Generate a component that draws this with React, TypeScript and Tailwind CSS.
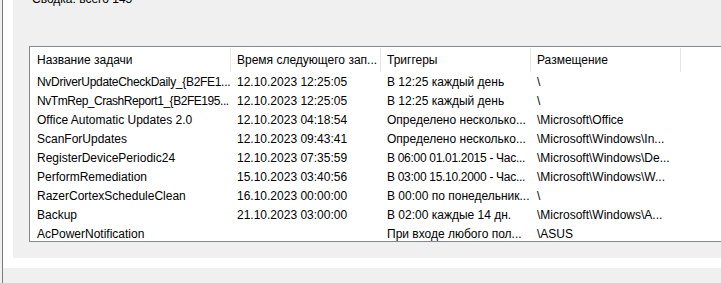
import React from "react";

const rows: [string, string, string, string][] = [
  ["NvDriverUpdateCheckDaily_{B2FE1...", "12.10.2023 12:25:05", "В 12:25 каждый день", "\\"],
  ["NvTmRep_CrashReport1_{B2FE195...", "12.10.2023 12:25:05", "В 12:25 каждый день", "\\"],
  ["Office Automatic Updates 2.0", "12.10.2023 04:18:54", "Определено несколько...", "\\Microsoft\\Office"],
  ["ScanForUpdates", "12.10.2023 09:43:41", "Определено несколько...", "\\Microsoft\\Windows\\In..."],
  ["RegisterDevicePeriodic24", "12.10.2023 07:35:59", "В 06:00 01.01.2015 - Час...", "\\Microsoft\\Windows\\De..."],
  ["PerformRemediation", "15.10.2023 03:40:56", "В 03:00 15.10.2000 - Час...", "\\Microsoft\\Windows\\W..."],
  ["RazerCortexScheduleClean", "16.10.2023 00:00:00", "В 00:00 по понедельник...", "\\"],
  ["Backup", "21.10.2023 03:00:00", "В 02:00 каждые 14 дн.", "\\Microsoft\\Windows\\A..."],
  ["AcPowerNotification", "", "При входе любого пол...", "\\ASUS"],
];

const headers = ["Название задачи", "Время следующего зап...", "Триггеры", "Размещение"];
const widths = ["w-[201px]", "w-[150px]", "w-[150px]", "w-[150px]"];
const pads = ["pl-[7px]", "pl-[6px]", "pl-[6px]", "pl-[6px]"];

const tight: Record<string, string> = {
  "0-0": "tracking-[-0.3px]",
  "1-0": "tracking-[-0.45px]",
  "4-2": "tracking-[-0.3px]",
  "5-2": "tracking-[-0.3px]",
};

export default function App() {
  return (
    <div
      className="w-[721px] h-[283px] overflow-hidden bg-[#f0f0f0] flex text-black"
      style={{ fontFamily: '"Liberation Sans", Arial, sans-serif' }}
    >
      <div className="w-[2px] shrink-0 bg-[#f0f0f0]" />
      <div className="w-[1px] shrink-0 bg-[#7a7a7a]" />
      <div className="flex-1 flex flex-col min-w-0">
        <div className="h-[268px] shrink-0 bg-white pl-[10px] pb-[10px]">
          <div className="h-full bg-[#f0f0f0] pl-[16px] flex flex-col">
            <div className="mt-[-9px] h-[16px] leading-[16px] text-[12px] pl-[3px] whitespace-nowrap">
              Сводка: всего 145
            </div>
            <div className="mt-[39px] h-[196px] w-[720px] shrink-0 bg-white border-l border-t border-b border-[#828790] overflow-hidden text-[12px]">
              <div className="h-[25px] flex">
                {headers.map((h, i) => (
                  <div key={i} className={`${widths[i]} shrink-0 h-full flex items-stretch`}>
                    <div className={`flex-1 ${pads[i]} flex items-center whitespace-nowrap overflow-hidden`}>{h}</div>
                    <div className="w-[1px] mt-[1px] bg-[#e5e5e5]" />
                  </div>
                ))}
              </div>
              {rows.map((r, ri) => (
                <div key={ri} className="h-[19px] flex items-center">
                  {r.map((c, ci) => (
                    <div
                      key={ci}
                      className={`${widths[ci]} shrink-0 ${pads[ci]} whitespace-nowrap overflow-hidden ${
                        tight[`${ri}-${ci}`] ?? ""
                      }`}
                    >
                      {c}
                    </div>
                  ))}
                </div>
              ))}
            </div>
          </div>
        </div>
        <div className="flex-1 bg-[#f0f0f0]" />
      </div>
    </div>
  );
}
